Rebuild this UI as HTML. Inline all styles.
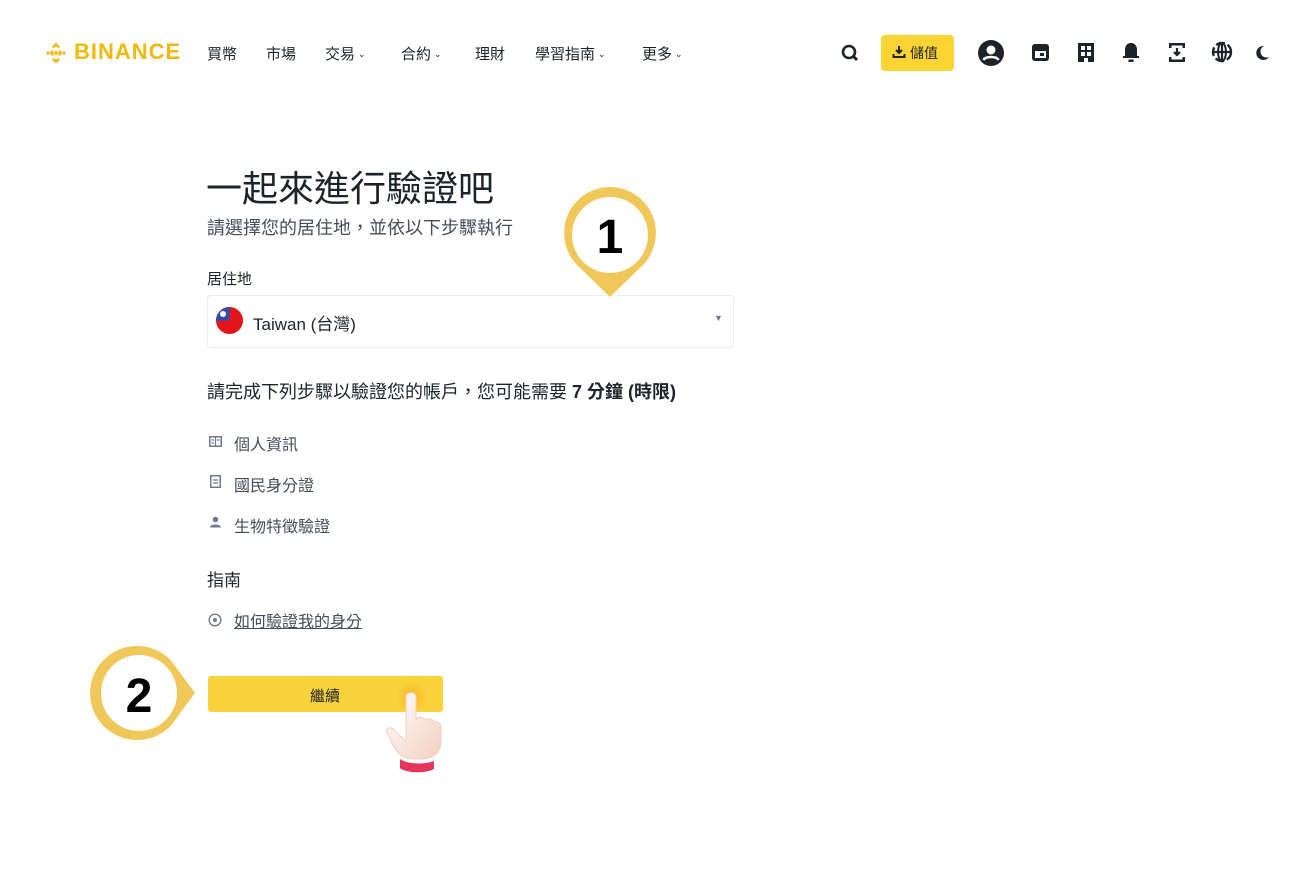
<!DOCTYPE html>
<html><head><meta charset="utf-8"><style>
*{margin:0;padding:0;box-sizing:border-box}
body{width:1300px;height:886px;background:#fff;position:relative;overflow:hidden;font-family:"Liberation Sans","Noto Sans CJK TC",sans-serif;color:#1e2329}
.a{position:absolute;white-space:nowrap}
.nav{font-size:15px;color:#1e2329;top:43px}
.car{font-size:9px;margin-left:3px;vertical-align:2px}
</style></head><body>
<!-- logo -->
<svg class="a" style="left:43px;top:40px" width="26" height="26" viewBox="0 0 26 26"><g fill="#f0b90b"><path d="M9 6.5L13 2.5 17 6.5 15.3 8.2 13 5.9 10.7 8.2z"/><path d="M9 19.5L13 23.5 17 19.5 15.3 17.8 13 20.1 10.7 17.8z"/><path d="M3 13l2-2 2 2-2 2z"/><path d="M19 13l2-2 2 2-2 2z"/><path d="M10.5 13L13 10.5 15.5 13 13 15.5z"/><path d="M6.5 13l3-3 1.6 1.6-1.4 1.4 1.4 1.4L9.5 16z"/><path d="M19.5 13l-3-3-1.6 1.6 1.4 1.4-1.4 1.4 1.6 1.6z"/></g></svg>
<div class="a" style="left:74px;top:39px;font-size:22px;font-weight:bold;color:#f0b90b;letter-spacing:1px">BINANCE</div>
<div class="a nav" style="left:207px">買幣</div>
<div class="a nav" style="left:266px">市場</div>
<div class="a nav" style="left:325px">交易<span class="car">⌄</span></div>
<div class="a nav" style="left:401px">合約<span class="car">⌄</span></div>
<div class="a nav" style="left:475px">理財</div>
<div class="a nav" style="left:535px">學習指南<span class="car">⌄</span></div>
<div class="a nav" style="left:642px">更多<span class="car">⌄</span></div>
<!-- right icons -->
<svg class="a" style="left:840px;top:43px" width="20" height="20" viewBox="0 0 20 20"><circle cx="9" cy="9" r="6" fill="none" stroke="#1e2329" stroke-width="2.6"/><path d="M13 13l4 4" stroke="#1e2329" stroke-width="2.8"/></svg>
<div class="a" style="left:881px;top:35px;width:73px;height:36px;background:#fcd535;border-radius:4px"></div>
<svg class="a" style="left:892px;top:45px" width="14" height="14" viewBox="0 0 14 14"><path d="M7 1v7M4 5l3 3 3-3M1.5 9v3h11V9" fill="none" stroke="#1e2329" stroke-width="2"/></svg>
<div class="a" style="left:910px;top:43px;font-size:14px;color:#1e2329">儲值</div>
<svg class="a" style="left:977px;top:39px" width="28" height="28" viewBox="0 0 28 28"><circle cx="14" cy="14" r="13" fill="#1e2329"/><circle cx="14" cy="11" r="4.5" fill="#fff"/><path d="M6.5 21c2-4 13-4 15 0" stroke="#fff" stroke-width="2.5" fill="none"/></svg>
<svg class="a" style="left:1031px;top:43px" width="19" height="19" viewBox="0 0 19 19"><rect x="1" y="1" width="17" height="17" rx="3" fill="#1e2329"/><rect x="4" y="8" width="11" height="7" fill="#fff"/><rect x="9" y="10" width="4" height="3" fill="#1e2329"/></svg>
<svg class="a" style="left:1077px;top:42px" width="18" height="21" viewBox="0 0 18 21"><rect x="1" y="1" width="16" height="19" fill="#1e2329"/><rect x="4" y="4" width="4" height="4" fill="#fff"/><rect x="10" y="4" width="4" height="4" fill="#fff"/><rect x="4" y="10" width="4" height="4" fill="#fff"/><rect x="10" y="10" width="4" height="4" fill="#fff"/><rect x="7" y="16" width="4" height="4" fill="#fff"/></svg>
<svg class="a" style="left:1121px;top:41px" width="20" height="22" viewBox="0 0 20 22"><path d="M10 2c-4 0-6 3-6 7v6H2v2h16v-2h-2V9c0-4-2-7-6-7z" fill="#1e2329"/><rect x="7.5" y="18.5" width="5" height="2.5" fill="#1e2329"/></svg>
<svg class="a" style="left:1167px;top:42px" width="20" height="21" viewBox="0 0 20 21"><path d="M2 1h16v5h-2.5V3.5h-11V6H2zM2 20h16v-5h-2.5v2.5h-11V15H2z" fill="#1e2329"/><path d="M10 6v7M7 10l3 3 3-3" stroke="#1e2329" stroke-width="2.2" fill="none"/></svg>
<svg class="a" style="left:1211px;top:41px" width="22" height="22" viewBox="0 0 22 22"><circle cx="11" cy="11" r="9" fill="none" stroke="#1e2329" stroke-width="2.4" stroke-dasharray="9 3"/><path d="M2 11h18M11 2v18" stroke="#1e2329" stroke-width="2.2"/><ellipse cx="11" cy="11" rx="4" ry="9" fill="none" stroke="#1e2329" stroke-width="2"/></svg>
<svg class="a" style="left:1256px;top:45px" width="14" height="16" viewBox="0 0 14 16"><path d="M8 1a7 7 0 1 0 5 11A6 6 0 0 1 8 1z" fill="#1e2329"/></svg>

<!-- content -->
<div class="a" style="left:206px;top:160px;font-size:36px;color:#1e2329;font-weight:400">一起來進行驗證吧</div>
<div class="a" style="left:207px;top:214px;font-size:18px;color:#474d57">請選擇您的居住地，並依以下步驟執行</div>
<div class="a" style="left:207px;top:268px;font-size:15px;color:#1e2329">居住地</div>
<div class="a" style="left:207px;top:295px;width:527px;height:53px;border:1px solid #eaecef;border-radius:4px"></div>
<svg class="a" style="left:216px;top:307px" width="27" height="27" viewBox="0 0 27 27"><circle cx="13.5" cy="13.5" r="13.5" fill="#e4141c"/><path d="M0 13.5A13.5 13.5 0 0 1 13.5 0V13.5z" fill="#2a4db0"/><circle cx="7" cy="7" r="3" fill="#fff"/></svg>
<div class="a" style="left:253px;top:310px;font-size:17px;color:#1e2329">Taiwan (台灣)</div>
<div class="a" style="left:714px;top:313px;font-size:9px;color:#707a8a">▼</div>
<div class="a" style="left:207px;top:378px;font-size:18px;color:#1e2329">請完成下列步驟以驗證您的帳戶，您可能需要 <b>7 分鐘 (時限)</b></div>
<svg class="a" style="left:209px;top:436px" width="13" height="11" viewBox="0 0 13 11"><rect x="0.75" y="0.75" width="11.5" height="9.5" fill="none" stroke="#707a8a" stroke-width="1.5"/><path d="M6.5 1v9M2.5 4h2.5M2.5 7h2.5M8 4h2.5" stroke="#707a8a" stroke-width="1.2"/></svg>
<div class="a" style="left:234px;top:431px;font-size:16px;color:#474d57">個人資訊</div>
<svg class="a" style="left:210px;top:475px" width="11" height="13" viewBox="0 0 11 13"><rect x="0.75" y="0.75" width="9.5" height="11.5" fill="none" stroke="#707a8a" stroke-width="1.5"/><path d="M3 5h5M3 8h5" stroke="#707a8a" stroke-width="1.3"/></svg>
<div class="a" style="left:234px;top:472px;font-size:16px;color:#474d57">國民身分證</div>
<svg class="a" style="left:209px;top:516px" width="13" height="12" viewBox="0 0 13 12"><circle cx="6.5" cy="3.5" r="2.8" fill="#707a8a"/><path d="M1 11.5c0-4 11-4 11 0z" fill="#707a8a"/></svg>
<div class="a" style="left:234px;top:513px;font-size:16px;color:#474d57">生物特徵驗證</div>
<div class="a" style="left:207px;top:566px;font-size:17px;color:#1e2329">指南</div>
<svg class="a" style="left:208px;top:613px" width="14" height="14" viewBox="0 0 14 14"><circle cx="7" cy="7" r="5.8" fill="none" stroke="#707a8a" stroke-width="1.4"/><circle cx="7" cy="7" r="2" fill="#707a8a"/></svg>
<div class="a" style="left:234px;top:608px;font-size:16px;color:#474d57;text-decoration:underline">如何驗證我的身分</div>
<div class="a" style="left:208px;top:676px;width:235px;height:36px;background:#f8d33a;border-radius:3px"></div>
<div class="a" style="left:310px;top:685px;font-size:15px;color:#1e2329">繼續</div>

<!-- pins -->
<svg class="a" style="left:560px;top:182px" width="100" height="118" viewBox="0 0 100 118"><path d="M50 5a46 46 0 0 1 30 80.8L50 115 20 85.8A46 46 0 0 1 50 5z" fill="#f0c85a"/><circle cx="50" cy="53" r="38" fill="#fff"/><text x="50" y="71" text-anchor="middle" font-family="Liberation Sans" font-weight="bold" font-size="48" fill="#000">1</text></svg>
<svg class="a" style="left:85px;top:642px" width="120" height="102" viewBox="0 0 120 102"><path d="M52 4a47 47 0 0 1 34 14.5L110 51 86 83.5A47 47 0 1 1 52 4z" fill="#f0c85a"/><circle cx="54" cy="51" r="38" fill="#fff"/><text x="54" y="70" text-anchor="middle" font-family="Liberation Sans" font-weight="bold" font-size="48" fill="#000">2</text></svg>

<!-- hand -->
<svg class="a" style="left:380px;top:675px" width="90" height="105" viewBox="0 0 90 105"><defs><radialGradient id="g" cx="0.5" cy="0.5" r="0.5"><stop offset="0" stop-color="#ffb020" stop-opacity=".9"/><stop offset="1" stop-color="#ffb020" stop-opacity="0"/></radialGradient><linearGradient id="h" x1="0" y1="0" x2="1" y2="1"><stop offset="0" stop-color="#fff"/><stop offset="1" stop-color="#f3cfc0"/></linearGradient></defs><circle cx="32" cy="22" r="16" fill="url(#g)"/><path d="M26 22c0-6 10-6 10 0v22c3-3 8-2 9 1 3-2 8-1 9 2 3-1 7 1 7 5v14c0 12-8 18-20 18h-8c-10 0-16-6-20-14l-6-12c-2-4 3-7 6-4l13 12V22z" fill="url(#h)" stroke="#f0d0c0" stroke-width="1"/><path d="M20 84c6 5 24 6 34 2v8c-10 5-28 4-34-1z" fill="#e8335a"/></svg>
</body></html>
